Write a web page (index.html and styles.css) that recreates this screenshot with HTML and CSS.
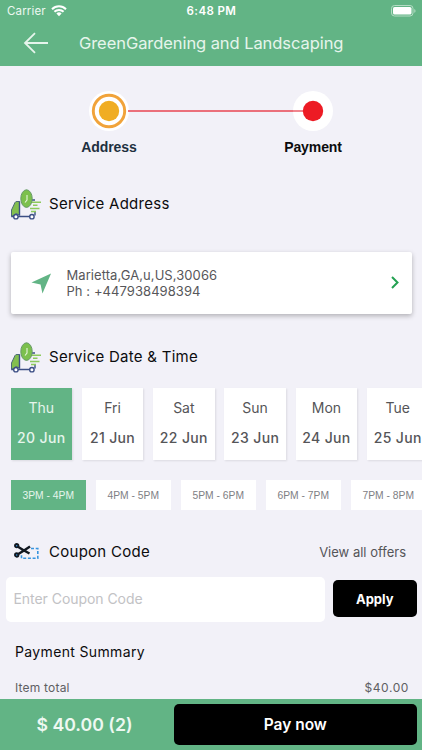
FILE: index.html
```html
<!DOCTYPE html>
<html lang="en">
<head>
<meta charset="utf-8">
<meta name="viewport" content="width=device-width, initial-scale=1">
<title>GreenGardening and Landscaping</title>
<link rel="stylesheet" href="styles.css">
</head>
<body>
<svg class="defs" aria-hidden="true">
  <symbol id="truck" viewBox="0 0 31 32">
    <path d="M1.500 27V21L5 13.500Q5.500 12.500 7 12.500H9.500V26L6 24.500 3 27Z" fill="#83bf4f" stroke="#4c6a78" stroke-width="1"/>
    <path d="M9.500 12.500V26.500M8 27.500H20M1.200 27.500H4M22 11h3M25 22.500v4" fill="none" stroke="#3c4f85" stroke-width="1.400"/>
    <path d="M22 13.200H31M23 16.300H27.500M20 19.500H29.500M21 22.500H26" stroke="#8dca5c" stroke-width="1.400"/>
    <circle cx="5.900" cy="27.700" r="2.200" fill="#fff" stroke="#3c4f85" stroke-width="1.400"/>
    <circle cx="21.900" cy="27.700" r="2.200" fill="#fff" stroke="#3c4f85" stroke-width="1.400"/>
    <ellipse cx="16.500" cy="9.600" rx="5.700" ry="8.800" fill="#7cc04d" stroke="#659966" stroke-width="1"/>
    <path d="M17 6v5l-2 2.500" fill="none" stroke="#e8f6dc" stroke-width="1.100"/>
  </symbol>
</svg>
<header class="header">
  <div class="status">
    <span class="carrier">Carrier</span>
    <svg class="wifi" viewBox="0 0 16 12"><path d="M1 4.200a10 10 0 0 1 14 0M3.400 6.800a6.500 6.500 0 0 1 9.200 0" fill="none" stroke="#fff" stroke-width="2"/><path d="M5.400 8.600a3.700 3.700 0 0 1 5.200 0L8 11.300Z" fill="#fff"/></svg>
    <span class="clock">6:48 PM</span>
    <svg class="battery" viewBox="0 0 25 12"><rect x=".5" y=".5" width="21.500" height="10.500" rx="3" fill="none" stroke="#b4dcc4"/><rect x="2" y="2" width="18.500" height="7.500" rx="1.600" fill="#fff"/><path d="M23.300 4v3.800q1.200-.6 1.200-1.900t-1.200-1.900" fill="#b4dcc4"/></svg>
  </div>
  <div class="nav">
    <svg class="back" viewBox="0 0 26 22"><path d="M25 11H2M12 1.200 2 11l10 9.800" fill="none" stroke="#e6f5ec" stroke-width="1.800"/></svg>
    <h1 class="title">GreenGardening and Landscaping</h1>
  </div>
</header>
<main class="content">
  <section class="stepper">
    <div class="step"><span class="dot"><svg viewBox="0 0 40 40"><circle cx="20" cy="20" r="15.700" fill="none" stroke="#f1a33a" stroke-width="2.900"/><circle cx="20" cy="20" r="10.200" fill="#f0ad22"/></svg></span><span class="label label-active">Address</span></div>
    <svg class="line" viewBox="0 0 166 2"><path d="M0 1H166" stroke="#e84552" stroke-width="1.300"/></svg>
    <div class="step"><span class="dot"><svg viewBox="0 0 40 40"><path d="M0 20H20" stroke="#e84552" stroke-width="1.300"/><circle cx="20" cy="20" r="10.200" fill="#ed1b24"/></svg></span><span class="label">Payment</span></div>
  </section>
  <div class="heading heading-address"><svg class="truck"><use href="#truck"/></svg><h2>Service Address</h2></div>
  <section class="card">
    <svg class="arrow" viewBox="0 0 22 22"><path d="M21 .5 12 21.500 10 12 .5 10Z" fill="#62b485"/></svg>
    <div class="address"><div>Marietta,GA,u,US,30066</div><div>Ph : +447938498394</div></div>
    <svg class="chevron" viewBox="0 0 8 13"><path d="M1 1l5.500 5.500L1 12" fill="none" stroke="#24a152" stroke-width="2"/></svg>
  </section>
  <div class="heading heading-date"><svg class="truck"><use href="#truck"/></svg><h2>Service Date &amp; Time</h2></div>
  <div class="days">
    <div class="day selected"><span>Thu</span><b>20 Jun</b></div>
    <div class="day"><span>Fri</span><b>21 Jun</b></div>
    <div class="day"><span>Sat</span><b>22 Jun</b></div>
    <div class="day"><span>Sun</span><b>23 Jun</b></div>
    <div class="day"><span>Mon</span><b>24 Jun</b></div>
    <div class="day"><span>Tue</span><b>25 Jun</b></div>
  </div>
  <div class="times">
    <div class="time selected">3PM - 4PM</div>
    <div class="time">4PM - 5PM</div>
    <div class="time">5PM - 6PM</div>
    <div class="time">6PM - 7PM</div>
    <div class="time">7PM - 8PM</div>
  </div>
  <div class="heading heading-coupon">
    <svg class="scissors" viewBox="0 0 25 17"><path d="M17 5.500h6.800v9.800H7.500V12" fill="none" stroke="#3795df" stroke-width="1.600" stroke-dasharray="3 1.700"/><path d="M3.500 3.500 10 7.500 15.500 10.500M3.500 11.500 10 7.500 16 3.500" fill="none" stroke="#111820" stroke-width="2.400"/><circle cx="2.700" cy="2.700" r="1.700" fill="#3795df" stroke="#111820" stroke-width="1.900"/><circle cx="2.700" cy="12" r="1.700" fill="#3795df" stroke="#111820" stroke-width="1.900"/></svg>
    <h2>Coupon Code</h2><span class="offers">View all offers</span>
  </div>
  <div class="coupon"><div class="input">Enter Coupon Code</div><div class="apply">Apply</div></div>
  <h2 class="summary">Payment Summary</h2>
  <div class="total"><span class="item">Item total</span><span class="price">$40.00</span></div>
</main>
<footer class="footer"><div class="amount">$ 40.00 (2)</div><div class="pay">Pay now</div></footer>
</body>
</html>
```
FILE: styles.css
```css
* { box-sizing: border-box; }
body {
  margin: 0; width: 422px; height: 750px; overflow: hidden;
  display: flex; flex-direction: column;
  background: #f2f1f8; color: #0c0c0e;
  font-family: Inter, "Liberation Sans", sans-serif;
  white-space: nowrap;
}
h1, h2 { margin: 0; font-weight: 400; }
svg { display: block; flex: none; }
.defs { display: none; }
.header { height: 65.500px; flex: none; background: #62b485; color: #fff; }
.status { height: 22px; display: grid; grid-template-columns: 44px 1fr auto 1fr; align-items: center; padding: 0 6px 0 7px; font-size: 11.500px; }
.carrier { letter-spacing: .15px; color: #edf8f1; }
.wifi { width: 16px; height: 12px; }
.clock { font-weight: 600; letter-spacing: .4px; margin-right: 44px; }
.battery { width: 25px; height: 12px; justify-self: end; }
.nav { height: 43px; display: flex; align-items: center; padding-left: 23px; }
.back { width: 26px; height: 22px; margin-top: -1px; }
.title { margin: -1px 0 0 30px; font-size: 16.500px; color: #e6f5ec; letter-spacing: -.07px; }
.content { height: 633.500px; flex: none; overflow: hidden; }
.stepper { display: flex; justify-content: center; padding-top: 25.500px; height: 124.500px; }
.step { width: 40px; display: flex; flex-direction: column; align-items: center; }
.dot { width: 40px; height: 40px; border-radius: 50%; background: #fff; }
.label { margin-top: 6.500px; font: 700 14px/18px "Liberation Sans", sans-serif; letter-spacing: -.1px; }
.label-active { color: #1e303f; }
.line { width: 166px; height: 2px; margin: 19px -1px 0; }
.heading { display: flex; align-items: center; height: 32px; padding-left: 10px; }
.heading h2 { font-size: 15px; line-height: 22px; letter-spacing: .27px; margin-top: -2px; }
.heading-address { margin-top: -1px; }
.truck { width: 31px; height: 32px; margin-right: 8px; }
.card { margin: 31px 10.500px 0; height: 62px; border-radius: 2px; background: #fff; box-shadow: 0 2px 5px #00000045; display: flex; align-items: center; padding: 0 12.500px 0 20px; }
.arrow { width: 21px; height: 21px; }
.address { margin-left: 15px; flex: 1; font-size: 13px; line-height: 16px; color: #57575a; letter-spacing: .07px; }
.chevron { width: 8px; height: 13px; margin-top: -1px; }
.heading-date { margin-top: 28px; }
.days { display: flex; gap: 9.800px; padding-left: 10.500px; margin-top: 14px; }
.day { flex: none; width: 61.500px; height: 72px; background: #fff; color: #555558; box-shadow: 1px 1px 2px #00000018; display: flex; flex-direction: column; align-items: center; gap: 10px; padding-top: 9px; font-size: 14px; line-height: 20px; }
.day span { padding-top: 1px; }
.day b { font-weight: 500; letter-spacing: .35px; }
.times { display: flex; gap: 9.500px; padding-left: 10.500px; margin-top: 20px; }
.time { flex: none; width: 75.500px; height: 30px; background: #fff; color: #808084; font: 10.300px/31px "Liberation Sans", sans-serif; text-align: center; }
.day.selected, .time.selected { background: #62b485; color: #e6f5ec; }
.heading-coupon { margin-top: 25px; padding-left: 14px; padding-right: 16px; }
.heading-coupon h2 { margin-top: 1px; }
.scissors { width: 25px; height: 17px; margin-right: 10px; }
.offers { margin-left: auto; font-size: 13px; color: #555558; padding-top: 2px; }
.coupon { display: flex; align-items: center; gap: 8px; margin-top: 9.500px; padding-left: 5.500px; }
.input { width: 319.500px; height: 45.500px; border-radius: 5px; background: #fff; padding-left: 8px; font-size: 14px; line-height: 44px; color: #c2c2c5; letter-spacing: -.05px; }
.apply { width: 83.500px; height: 36.500px; border-radius: 5px; background: #000; color: #fff; font-size: 13px; font-weight: 700; line-height: 38px; text-align: center; margin-top: -2px; }
.summary { margin: 19px 0 0 15px; font-size: 14px; line-height: 22px; letter-spacing: .35px; }
.total { display: flex; justify-content: space-between; padding: 0 13px 0 15px; margin-top: 15px; font-size: 12px; line-height: 20px; color: #5f5f63; }
.item { letter-spacing: .2px; }
.price { letter-spacing: .6px; }
.footer { flex: none; height: 51px; background: #62b485; display: flex; align-items: center; }
.amount { width: 174px; padding-right: 5px; text-align: center; color: #edf8f1; font-size: 17.700px; font-weight: 600; }
.pay { width: 242.500px; height: 41px; border-radius: 5px; background: #000; color: #fff; font-size: 15.500px; font-weight: 600; line-height: 41px; text-align: center; }
```
